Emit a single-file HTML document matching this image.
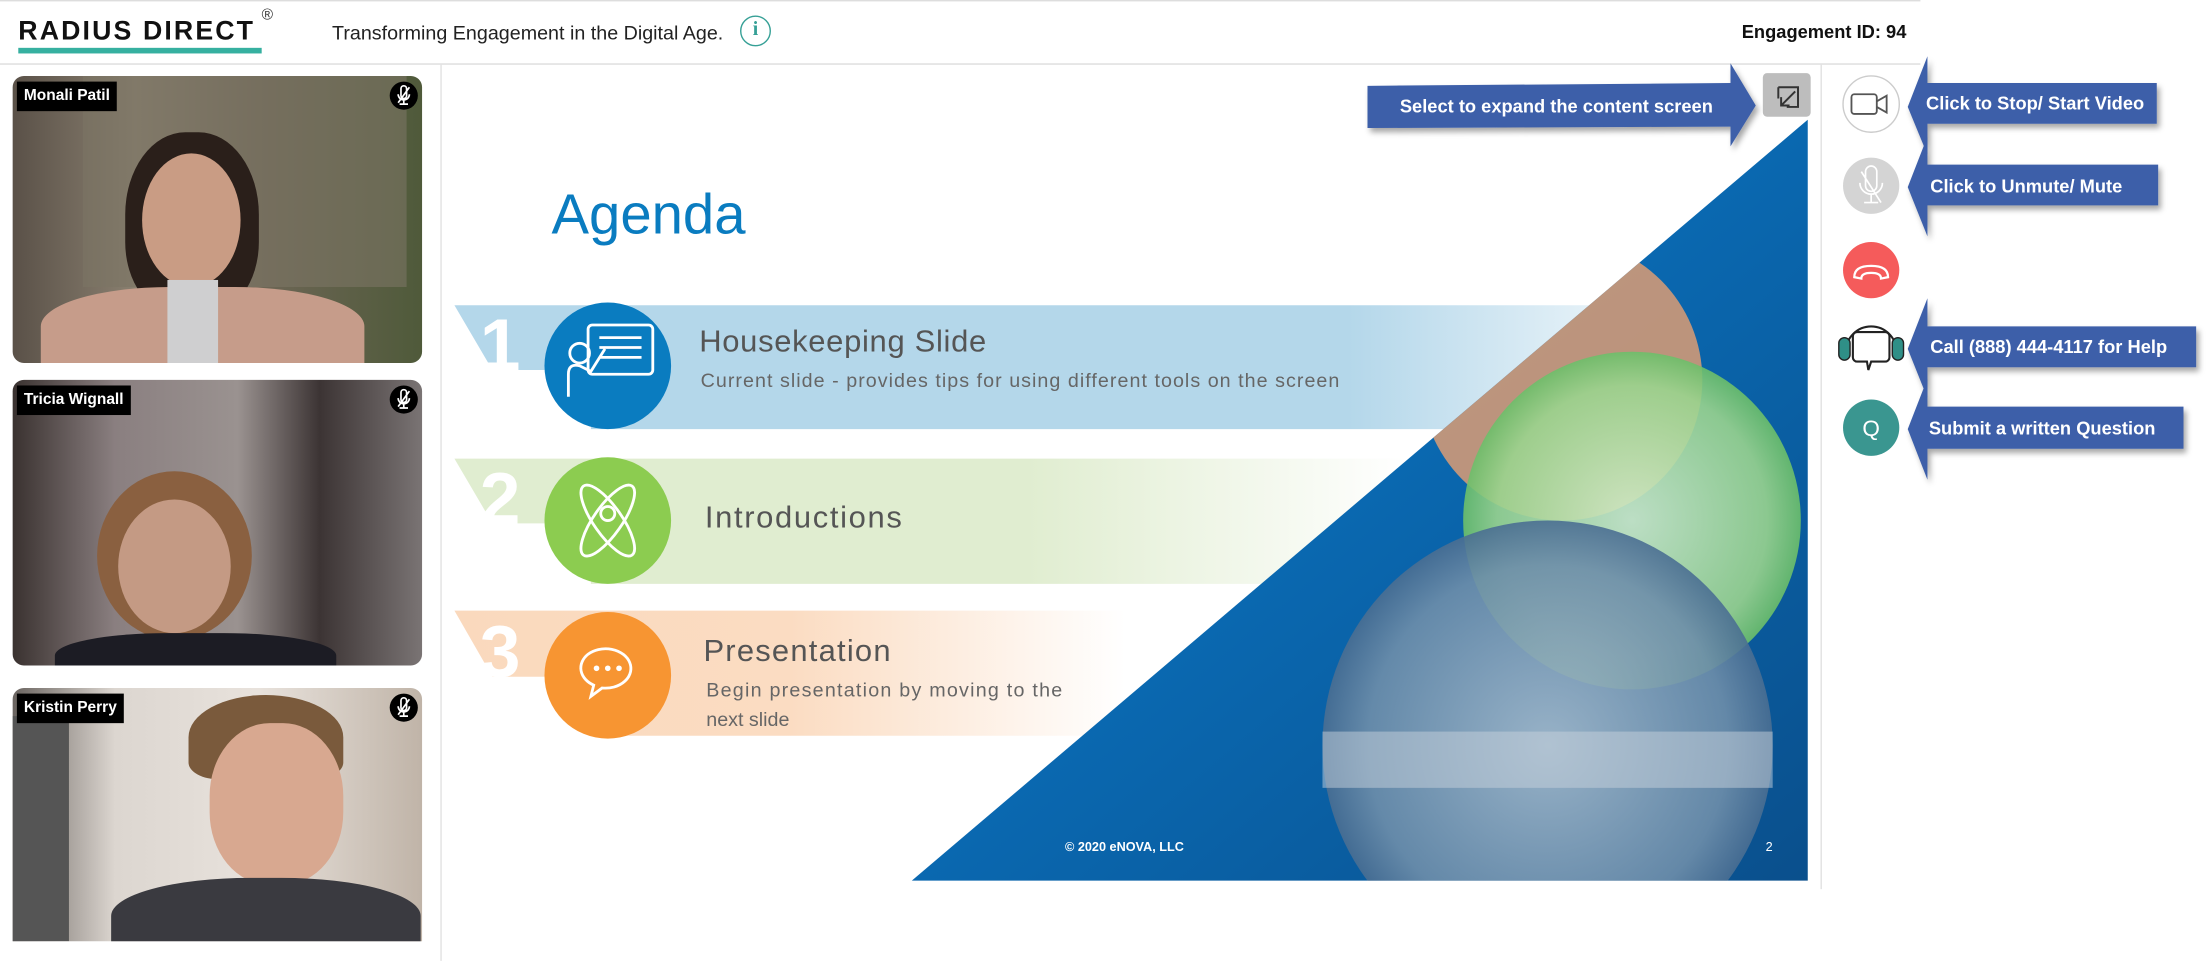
<!DOCTYPE html>
<html><head><meta charset="utf-8"><style>
html,body{margin:0;padding:0;background:#fff;overflow:hidden;width:2206px;height:960px}
#s{position:absolute;left:0;top:0;width:1568px;height:683px;transform:scale(1.40689);transform-origin:0 0;font-family:"Liberation Sans",sans-serif}
.a{position:absolute}
.tile{position:absolute;left:9px;width:291px;border-radius:8px;overflow:hidden}
.name{position:absolute;left:3px;top:4px;background:#000;color:#fff;font-weight:bold;font-size:11px;padding:4px 5px 5px}
.mute{position:absolute;right:3px;top:4px;width:20px;height:20px;border-radius:50%;background:#000}
.mute svg{position:absolute;left:0;top:0}
.co{position:absolute;color:#fff;font-weight:bold;font-size:13px}
</style></head><body><div id="s">
<div class="a" style="left:0;top:0;width:1365px;height:1px;background:#ddd"></div>
<div class="a" style="left:13px;top:12px;font-size:19px;font-weight:bold;letter-spacing:1.5px;color:#111">RADIUS DIRECT</div>
<div class="a" style="left:13px;top:34px;width:173px;height:4px;background:#36b0a0"></div>
<div class="a" style="left:186px;top:5px;font-size:11px;color:#333">®</div>
<div class="a" style="left:236px;top:15px;font-size:14px;color:#222">Transforming Engagement in the Digital Age.</div>
<div class="a" style="left:526px;top:11px;width:20px;height:20px;border:1px solid #36a096;border-radius:50%;color:#36a096;font-weight:bold;font-size:14px;text-align:center;line-height:20px;font-family:'Liberation Serif',serif">i</div>
<div class="a" style="left:1238px;top:15px;font-size:13px;font-weight:bold;color:#111">Engagement ID: 94</div>
<div class="a" style="left:0;top:45px;width:1365px;height:1px;background:#ddd"></div>
<div class="a" style="left:313px;top:46px;width:1px;height:637px;background:#e2e2e2"></div>
<div class="a" style="left:1294px;top:46px;width:1px;height:586px;background:#e2e2e2"></div>

<div class="tile" style="top:54px;height:204px;background:linear-gradient(90deg,#5a5148 0%,#8a8070 30%,#6e6656 60%,#4f5a3a 100%)">
<div class="a" style="left:50px;top:0;width:230px;height:150px;background:#7c7464;opacity:.6"></div>
<div class="a" style="left:80px;top:40px;width:95px;height:130px;border-radius:45% 45% 40% 40%;background:#2a1f1a"></div>
<div class="a" style="left:92px;top:55px;width:70px;height:95px;border-radius:50%;background:#c99c84"></div>
<div class="a" style="left:20px;top:150px;width:230px;height:70px;border-radius:40% 40% 0 0;background:#c69c8a"></div>
<div class="a" style="left:110px;top:145px;width:36px;height:60px;background:#cfcfd0"></div>
<div class="name">Monali Patil</div><div class="mute"><svg width="20" height="20"><path d="M8 5a2 2 0 0 1 4 0v5a2 2 0 0 1-4 0zM6 9a4 4 0 0 0 8 0M10 13v3M7 16h6M6 15l8-11" fill="none" stroke="#fff" stroke-width="1.2"/></svg></div></div>

<div class="tile" style="top:270px;height:203px;background:linear-gradient(90deg,#3a3230 0%,#8a7f80 25%,#9a9290 55%,#3c3434 75%,#7a7474 100%)">
<div class="a" style="left:60px;top:65px;width:110px;height:120px;border-radius:50%;background:#8a6040"></div>
<div class="a" style="left:75px;top:85px;width:80px;height:95px;border-radius:50%;background:#c49a84"></div>
<div class="a" style="left:30px;top:180px;width:200px;height:40px;border-radius:40% 40% 0 0;background:#1c1c24"></div>
<div class="name">Tricia Wignall</div><div class="mute"><svg width="20" height="20"><path d="M8 5a2 2 0 0 1 4 0v5a2 2 0 0 1-4 0zM6 9a4 4 0 0 0 8 0M10 13v3M7 16h6M6 15l8-11" fill="none" stroke="#fff" stroke-width="1.2"/></svg></div></div>

<div class="tile" style="top:489px;height:180px;border-radius:8px 8px 0 0;background:linear-gradient(90deg,#6a6460 0%,#dcd6d0 25%,#e8e2dc 60%,#c0b4a8 100%)">
<div class="a" style="left:125px;top:5px;width:110px;height:60px;border-radius:50% 50% 20% 20%;background:#7a5a3c"></div>
<div class="a" style="left:140px;top:25px;width:95px;height:115px;border-radius:45%;background:#d8a890"></div>
<div class="a" style="left:70px;top:135px;width:220px;height:60px;border-radius:45% 45% 0 0;background:#3a3a40"></div>
<div class="a" style="left:0;top:20px;width:40px;height:160px;background:#555"></div>
<div class="name">Kristin Perry</div><div class="mute"><svg width="20" height="20"><path d="M8 5a2 2 0 0 1 4 0v5a2 2 0 0 1-4 0zM6 9a4 4 0 0 0 8 0M10 13v3M7 16h6M6 15l8-11" fill="none" stroke="#fff" stroke-width="1.2"/></svg></div></div>

<svg class="a" style="left:0;top:0" width="1568" height="683" viewBox="0 0 1568 683">
<defs>
<linearGradient id="g1" x1="0" x2="1"><stop offset="0" stop-color="#b4d7ea"/><stop offset=".7" stop-color="#b4d7ea"/><stop offset="1" stop-color="#fff"/></linearGradient>
<linearGradient id="g2" x1="0" x2="1"><stop offset="0" stop-color="#e0edd0"/><stop offset=".6" stop-color="#e0edd0"/><stop offset="1" stop-color="#fff"/></linearGradient>
<linearGradient id="g3" x1="0" x2="1"><stop offset="0" stop-color="#fad9bd"/><stop offset=".5" stop-color="#fbdcc2"/><stop offset="1" stop-color="#fff"/></linearGradient>
<linearGradient id="bl" x1="0" y1="0" x2="1" y2="1"><stop offset="0" stop-color="#0a4a8a"/><stop offset=".5" stop-color="#0a68b0"/><stop offset="1" stop-color="#0a4f8c"/></linearGradient>
<radialGradient id="gr"><stop offset="0" stop-color="#d0ecc8"/><stop offset=".8" stop-color="#9ad48e"/><stop offset="1" stop-color="#6cbf6a"/></radialGradient>
<radialGradient id="gb"><stop offset="0" stop-color="#a8bccc"/><stop offset=".8" stop-color="#6e8eaa"/><stop offset="1" stop-color="#4a6e92"/></radialGradient>
<clipPath id="tri"><polygon points="648,626 1285,85 1285,626"/></clipPath>
<filter id="sh"><feDropShadow dx="2" dy="3" stdDeviation="2" flood-opacity=".35"/></filter>
</defs>
<polygon points="323,217 1230,217 1230,305 420,305 420,263 350,263" fill="url(#g1)"/>
<polygon points="323,326 1000,326 1000,415 420,415 420,372 350,372" fill="url(#g2)"/>
<polygon points="323,434 800,434 800,523 420,523 420,481 350,481" fill="url(#g3)"/>
<text x="341" y="263" fill="#fff" font-size="52" font-family="Liberation Sans" font-weight="bold">1</text>
<text x="341" y="372" fill="#fff" font-size="52" font-family="Liberation Sans" font-weight="bold">2</text>
<text x="341" y="481" fill="#fff" font-size="52" font-family="Liberation Sans" font-weight="bold">3</text>
<g clip-path="url(#tri)">
<rect x="640" y="80" width="650" height="550" fill="url(#bl)"/>
<circle cx="1110" cy="270" r="100" fill="#e8a070" opacity=".8"/>
<circle cx="1160" cy="370" r="120" fill="url(#gr)" opacity=".9"/>
<circle cx="1100" cy="530" r="160" fill="url(#gb)" opacity=".9"/>
<rect x="940" y="520" width="320" height="40" fill="#c8d2dc" opacity=".5"/>
</g>
<text x="757" y="605" fill="#fff" font-size="9" font-family="Liberation Sans" font-weight="bold">© 2020 eNOVA, LLC</text>
<text x="1255" y="605" fill="#fff" font-size="9" font-family="Liberation Sans">2</text>
<text x="392" y="166" fill="#0a7cc0" font-size="40" font-family="Liberation Sans">Agenda</text>
<circle cx="432" cy="260" r="45" fill="#0a7cc0"/>
<circle cx="432" cy="370" r="45" fill="#8ccc50"/>
<circle cx="432" cy="480" r="45" fill="#f79532"/>
<g fill="none" stroke="#fff" stroke-width="2">
<rect x="418" y="231" width="46" height="35" rx="3"/><line x1="426" y1="240" x2="456" y2="240"/><line x1="426" y1="247" x2="456" y2="247"/><line x1="426" y1="254" x2="456" y2="254"/>
<circle cx="412" cy="251" r="7"/><path d="M404 282v-16q0-8 8-6l8 4 10-16"/>
<ellipse cx="432" cy="370" rx="10" ry="30" transform="rotate(-35 432 370)"/><ellipse cx="432" cy="370" rx="10" ry="30" transform="rotate(35 432 370)"/><circle cx="432" cy="365" r="5"/>
<path d="M418 465a18 14 0 1 1 10 24l-8 6 2-8a18 14 0 0 1-4-22z"/>
</g>
<g fill="#fff"><circle cx="424" cy="475" r="2"/><circle cx="432" cy="475" r="2"/><circle cx="440" cy="475" r="2"/></g>
<g font-family="Liberation Sans" fill="#555">
<text x="497" y="250" font-size="22" textLength="204">Housekeeping Slide</text>
<text x="498" y="275" font-size="14" fill="#666" textLength="454">Current slide - provides tips for using different tools on the screen</text>
<text x="501" y="375" font-size="22" textLength="140">Introductions</text>
<text x="500" y="470" font-size="22" textLength="133">Presentation</text>
<text x="502" y="495" font-size="14" fill="#666" textLength="253">Begin presentation by moving to the</text>
<text x="502" y="516" font-size="14" fill="#666">next slide</text>
</g>
<rect x="1253" y="52" width="34" height="31" rx="3" fill="#bdbdbd"/>
<path d="M1264 62h14v14h-8M1264 62v8M1276 65l-10 10M1266 69v6h6" fill="none" stroke="#333" stroke-width="1.4"/>
<g filter="url(#sh)" fill="#3d5fa9">
<polygon points="972,61 1230,59 1230,45 1248,75 1230,104 1230,90 972,91"/>
<polygon points="1370,59 1533,59 1533,88 1370,88 1370,110 1356,76 1370,40"/>
<polygon points="1370,117 1534,117 1534,146 1370,146 1370,168 1356,133 1370,97"/>
<polygon points="1370,232 1561,232 1561,261 1370,261 1370,283 1356,248 1370,212"/>
<polygon points="1370,289 1552,289 1552,319 1370,319 1370,341 1356,305 1370,269"/>
</g>
<circle cx="1330" cy="74" r="20" fill="#fff" stroke="#ccc"/>
<rect x="1316" y="67" width="18" height="14" rx="2" fill="none" stroke="#555" stroke-width="1.3"/><path d="M1334 72l7-4v12l-7-4" fill="none" stroke="#555" stroke-width="1.3"/>
<circle cx="1330" cy="132" r="20" fill="#d4d4d4"/>
<path d="M1326 122a4 4 0 0 1 8 0v10a4 4 0 0 1-8 0zM1322 130a8 8 0 0 0 16 0M1330 138v6M1325 144h10M1323 122l14 22" fill="none" stroke="#fff" stroke-width="1.2"/>
<circle cx="1330" cy="192" r="20" fill="#f55b5b"/>
<path d="M1318 197q0-8 12-8t12 8l-5 1q0-4-7-4t-7 4z" fill="none" stroke="#fff" stroke-width="1.6"/>
<path d="M1312 250a18 18 0 0 1 36 0" fill="none" stroke="#222" stroke-width="1.5"/>
<rect x="1307" y="240" width="8" height="16" rx="4" fill="#2f8f87" stroke="#222"/><rect x="1345" y="240" width="8" height="16" rx="4" fill="#2f8f87" stroke="#222"/>
<path d="M1320 236h20a3 3 0 0 1 3 3v15a3 3 0 0 1-3 3h-10l-2 6-1-6h-7a3 3 0 0 1-3-3v-15a3 3 0 0 1 3-3z" fill="#fff" stroke="#222" stroke-width="1.5"/>
<circle cx="1330" cy="304" r="20" fill="#3a9690"/>
<text x="1330" y="310" fill="#fff" font-size="16" font-family="Liberation Sans" text-anchor="middle">Q</text>
</svg>
<div class="co" style="left:995px;top:68px">Select to expand the content screen</div>
<div class="co" style="left:1369px;top:66px">Click to Stop/ Start Video</div>
<div class="co" style="left:1372px;top:125px">Click to Unmute/ Mute</div>
<div class="co" style="left:1372px;top:239px">Call (888) 444-4117 for Help</div>
<div class="co" style="left:1371px;top:297px">Submit a written Question</div>
</div></body></html>
